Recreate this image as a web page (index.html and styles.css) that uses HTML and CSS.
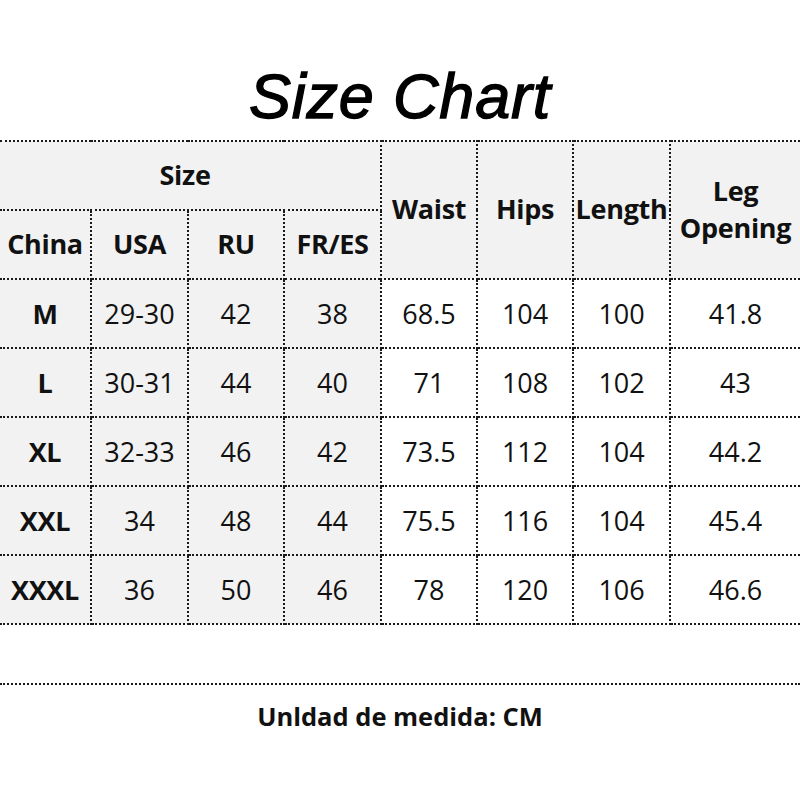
FILE: index.html
```html
<!DOCTYPE html>
<html lang="en">
<head>
<meta charset="utf-8">
<title>Size Chart</title>
<link rel="stylesheet" href="styles.css">
</head>
<body>
<h1 class="title">Size Chart</h1>
<table class="chart">
  <colgroup>
    <col class="w91"><col class="w97"><col class="w96"><col class="w97">
    <col class="w96"><col class="w96"><col class="w97"><col class="w130">
  </colgroup>
  <thead>
    <tr>
      <th colspan="4" class="first size-head">Size</th>
      <th rowspan="2">Waist</th>
      <th rowspan="2">Hips</th>
      <th rowspan="2">Length</th>
      <th rowspan="2" class="last">Leg<br>Opening</th>
    </tr>
    <tr>
      <th class="first">China</th>
      <th>USA</th>
      <th>RU</th>
      <th>FR/ES</th>
    </tr>
  </thead>
  <tbody>
    <tr><th class="first">M</th><td class="sz">29-30</td><td class="sz">42</td><td class="sz">38</td><td>68.5</td><td>104</td><td>100</td><td class="last">41.8</td></tr>
    <tr><th class="first">L</th><td class="sz">30-31</td><td class="sz">44</td><td class="sz">40</td><td>71</td><td>108</td><td>102</td><td class="last">43</td></tr>
    <tr><th class="first">XL</th><td class="sz">32-33</td><td class="sz">46</td><td class="sz">42</td><td>73.5</td><td>112</td><td>104</td><td class="last">44.2</td></tr>
    <tr><th class="first">XXL</th><td class="sz">34</td><td class="sz">48</td><td class="sz">44</td><td>75.5</td><td>116</td><td>104</td><td class="last">45.4</td></tr>
    <tr><th class="first">XXXL</th><td class="sz">36</td><td class="sz">50</td><td class="sz">46</td><td>78</td><td>120</td><td>106</td><td class="last">46.6</td></tr>
  </tbody>
</table>
<p class="note">Unldad de medida: CM</p>
</body>
</html>
```
FILE: styles.css
```css
html, body {
  margin: 0;
  padding: 0;
  background: #ffffff;
}

body {
  width: 800px;
  font-family: "Open Sans", "Noto Sans", sans-serif;
  color: #111111;
  overflow: hidden;
}

.title {
  margin: 0;
  height: 140px;
  box-sizing: border-box;
  padding-top: 65px;
  text-align: center;
  font-family: "Liberation Sans", Arial, sans-serif;
  font-style: italic;
  font-weight: 400;
  font-size: 63px;
  letter-spacing: 0.8px;
  line-height: 1;
  color: #000000;
  -webkit-text-stroke: 1.3px #000000;
}

.chart {
  width: 800px;
  border-collapse: collapse;
  table-layout: fixed;
}

.w91 { width: 91px; }
.w96 { width: 96px; }
.w97 { width: 97px; }
.w130 { width: 130px; }

.chart th,
.chart td {
  height: 67px;
  padding: 0;
  border: 2px dotted #1a1a1a;
  text-align: center;
  vertical-align: middle;
  font-size: 27px;
  color: #111111;
}

.chart th {
  font-weight: 700;
  font-size: 27px;
  line-height: 37px;
  letter-spacing: -0.3px;
}

.chart thead th {
  height: 64px;
  padding-bottom: 3px;
}

.chart .size-head {
  padding-right: 10px;
}

.chart td {
  font-weight: 400;
}

.chart thead th,
.chart tbody th,
.chart td.sz {
  background: #f2f2f2;
}

.chart .first { border-left: none; }
.chart .last { border-right: none; }

.note {
  margin: 58px 0 0;
  border-top: 2px dotted #1a1a1a;
  padding-top: 13px;
  text-align: center;
  font-weight: 700;
  font-size: 25.5px;
  line-height: 36px;
  color: #111111;
}
```
